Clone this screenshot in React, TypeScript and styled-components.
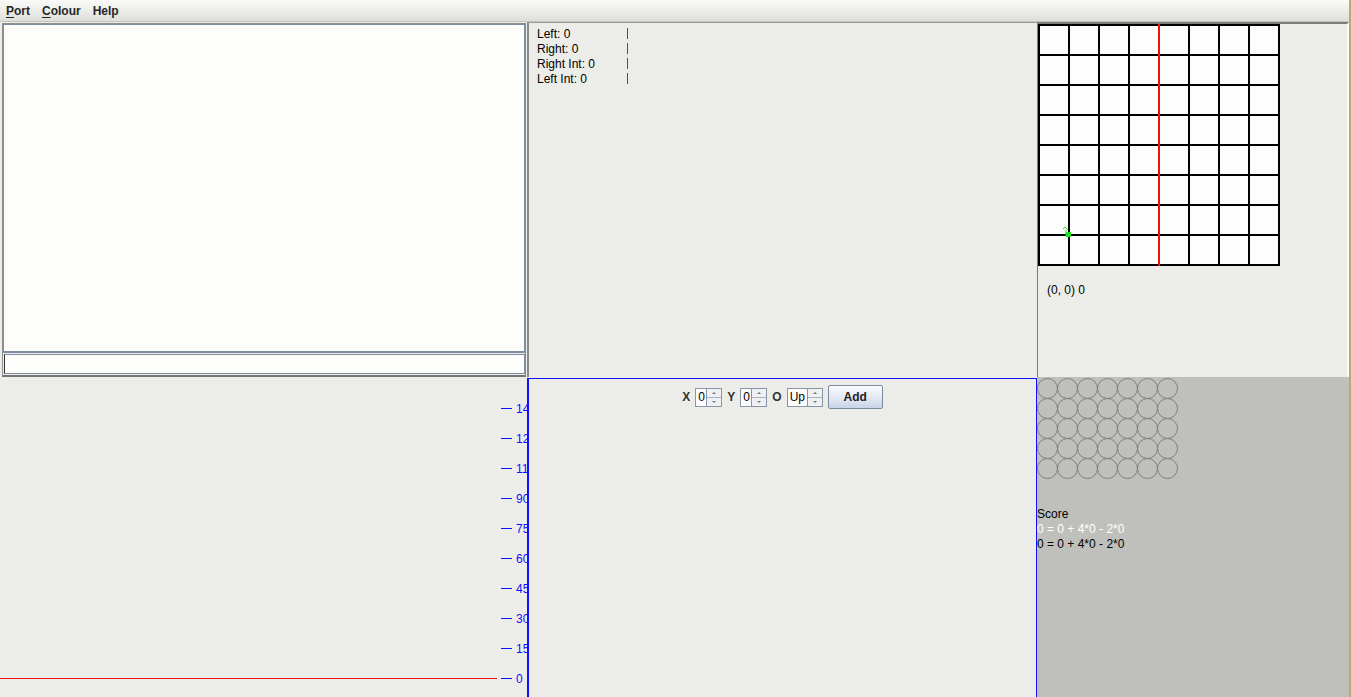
import styled, { createGlobalStyle } from "styled-components";

const GlobalStyle = createGlobalStyle`
    html, body {
        margin: 0;
        padding: 0;
        background: #ecede8;
    }
    body {
        font-family: "Liberation Sans", Arial, sans-serif;
        font-size: 12px;
        color: #000;
    }
`

const Window = styled.div`
    width: 1351px;
    height: 697px;
    box-sizing: border-box;
    border-right: 2px solid #c2a673;
    display: grid;
    grid-template-rows: 22px 355px 1fr;
    overflow: hidden;
    background: #ecede8;
`

const MenuBar = styled.div`
    display: flex;
    align-items: center;
    padding-top: 2px;
    background: linear-gradient(#fafaf8, #dedfdb);
    border-bottom: 1px solid #c4c5c1;
    box-sizing: border-box;
`

const MenuItem = styled.div`
    padding: 0 6px;
    font-weight: bold;
    font-size: 12px;
    color: #262626;
    line-height: 19px;

    u {
        text-decoration-thickness: 1px;
        text-underline-offset: 2px;
    }
`

const Row = styled.div`
    display: grid;
    grid-template-columns: 527px 510px 1fr;
    min-height: 0;
`

/* ---------- top row ---------- */

const ConsolePanel = styled.div`
    padding: 1px 1px 0 2px;
    box-sizing: border-box;
    display: flex;
`

const ConsoleFrame = styled.div`
    flex: 1;
    display: flex;
    flex-direction: column;
    border: 1px solid #8f8f8f;
    border-bottom: 2px solid #767676;
    background: #ecede8;
`

const ConsoleText = styled.div`
    flex: 1;
    background: #fdfdfb;
    border: 1px solid #7f8ea4;
    border-width: 1px 1px 2px 1px;
`

const ConsoleInput = styled.div`
    height: 20px;
    margin: 1px 0 1px 1px;
    background: #fdfdfb;
    border: 1px solid #7f8ea4;
    border-left: 1px solid #333;
    box-sizing: border-box;
`

const SensorPanel = styled.div`
    border-left: 2px solid #8c8c8c;
    border-top: 1px solid #9a9a9a;
    padding: 3px 0 0 8px;
    display: flex;
    flex-direction: column;
`

const SensorRow = styled.div`
    display: flex;
    align-items: center;
    height: 15px;
`

const SensorLabel = styled.span`
    width: 90px;
`

const SensorBar = styled.span<{ $value: number }>`
    width: 1px;
    height: 11px;
    background: #d81818;
    margin-left: ${props => props.$value}px;
`

const MapPanel = styled.div`
    border-left: 1px solid #7a7a7a;
    border-top: 2px solid #7c7c7c;
    border-right: 2px solid #fbfbf9;
    display: flex;
    flex-direction: column;
    align-items: flex-start;
`

const MapGrid = styled.svg`
    display: block;
`

const Position = styled.div`
    margin: 17px 0 0 9px;
`

/* ---------- bottom row ---------- */

const ChartPanel = styled.div`
    overflow: hidden;
`

const ChartSvg = styled.svg`
    display: block;
`

const ControlPanel = styled.div`
    border-left: 2px solid #1010ff;
    border-top: 1px solid #1010ff;
    border-right: 1px solid #1010ff;
    display: flex;
    justify-content: center;
    align-items: flex-start;
    padding-top: 6px;
    margin-top: 1px;
`

const Controls = styled.div`
    display: flex;
    align-items: center;
    gap: 5px;
`

const ControlLabel = styled.span`
    font-weight: bold;
    color: #333;
`

const Spinner = styled.div<{ $w: number }>`
    display: flex;
    width: ${props => props.$w}px;
    height: 19px;
    border: 1px solid #8896ab;
    box-sizing: border-box;
    background: #fdfdfb;
`

const SpinnerValue = styled.div`
    flex: 1;
    padding-left: 2px;
    line-height: 17px;
    border-right: 1px solid #8896ab;
`

const SpinnerArrows = styled.div`
    width: 14px;
    display: flex;
    flex-direction: column;
    background: #eef0f2;
`

const SpinnerArrow = styled.div<{ $up: boolean }>`
    flex: 1;
    display: flex;
    align-items: center;
    justify-content: center;
    border-top: ${props => props.$up ? "none" : "1px solid #a8b3c4"};
    &::after {
        content: "";
        width: 0;
        height: 0;
        border-left: 2px solid transparent;
        border-right: 2px solid transparent;
        ${props => props.$up ? "border-bottom: 2px solid #777;" : "border-top: 2px solid #777;"}
    }
`

const AddButton = styled.button`
    width: 55px;
    height: 24px;
    border: 1px solid #7d8ca3;
    border-radius: 2px;
    background: linear-gradient(#fbfcfd, #dfe6f1 60%, #c9d4e6);
    font-family: "Liberation Sans", Arial, sans-serif;
    font-weight: bold;
    font-size: 12px;
    color: #222;
    padding: 0;
`

const ScorePanel = styled.div`
    background: #bfc0bc;
    display: flex;
    flex-direction: column;
    align-items: flex-start;
`

const Circles = styled.svg`
    display: block;
    margin-top: 1px;
`

const ScoreBlock = styled.div`
    margin-top: 27px;
    line-height: 15px;
`

const ScoreLine = styled.div<{ $light?: boolean }>`
    color: ${props => props.$light ? "#ffffff" : "#000"};
`

function Spin({ value, width }: { value: string, width: number }) {
    return (<Spinner $w={width}>
        <SpinnerValue>{value}</SpinnerValue>
        <SpinnerArrows>
            <SpinnerArrow $up={true} />
            <SpinnerArrow $up={false} />
        </SpinnerArrows>
    </Spinner>);
}

const sensors = ["Left: 0", "Right: 0", "Right Int: 0", "Left Int: 0"];
// the chart panel clips the labels at the axis, as the original does
const ticks = ["0", "15", "30", "45", "60", "75", "90", "112", "127", "142"];

export default function App() {
    const cells = 8, size = 30;
    const gridLines = [];
    for (let i = 0; i <= cells; i++) {
        const p = 1 + i * size;
        gridLines.push(<line key={"h" + i} x1={0} y1={p} x2={242} y2={p} stroke="#000" strokeWidth={2} />);
        if (i !== 4) {
            gridLines.push(<line key={"v" + i} x1={p} y1={0} x2={p} y2={242} stroke="#000" strokeWidth={2} />);
        }
    }

    const circles = [];
    for (let r = 0; r < 5; r++) {
        for (let c = 0; c < 7; c++) {
            circles.push(<circle key={r + "-" + c} cx={10.5 + c * 20} cy={10.5 + r * 20} r={10} fill="none" stroke="#7e7e7e" strokeWidth={1} />);
        }
    }

    return (<>
        <GlobalStyle />
        <Window>
            <MenuBar>
                <MenuItem><u>P</u>ort</MenuItem>
                <MenuItem><u>C</u>olour</MenuItem>
                <MenuItem>Help</MenuItem>
            </MenuBar>

            <Row>
                <ConsolePanel>
                    <ConsoleFrame>
                        <ConsoleText />
                        <ConsoleInput />
                    </ConsoleFrame>
                </ConsolePanel>

                <SensorPanel>
                    {sensors.map(s => (<SensorRow key={s}>
                        <SensorLabel>{s}</SensorLabel>
                        <SensorBar $value={0} />
                    </SensorRow>))}
                </SensorPanel>

                <MapPanel>
                    <MapGrid width={242} height={242}>
                        <rect x={0} y={0} width={242} height={242} fill="#fdfdfd" />
                        {gridLines}
                        <line x1={121} y1={0} x2={121} y2={242} stroke="#f01010" strokeWidth={2} />
                        <rect x={28} y={208} width={5} height={5} fill="#20e020" />
                        <polyline points="25,205 27,203 30,206" fill="none" stroke="#20e020" strokeWidth={1} />
                        <line x1={28} y1={206} x2={28} y2={213} stroke="#20e020" strokeWidth={1} />
                    </MapGrid>
                    <Position>(0, 0) 0</Position>
                </MapPanel>
            </Row>

            <Row>
                <ChartPanel>
                    <ChartSvg width={540} height={320}>
                        <line x1={0} y1={301.5} x2={497} y2={301.5} stroke="#f01010" strokeWidth={1} />
                        {ticks.map((t, i) => {
                            const y = 301.5 - i * 30;
                            return (<g key={t}>
                                <line x1={501} y1={y} x2={512} y2={y} stroke="#1010ff" strokeWidth={1} />
                                <text x={516} y={y + 4} fill="#1010ff" fontSize={12} fontFamily="Liberation Sans, Arial, sans-serif">{t}</text>
                            </g>);
                        })}
                    </ChartSvg>
                </ChartPanel>

                <ControlPanel>
                    <Controls>
                        <ControlLabel>X</ControlLabel>
                        <Spin value="0" width={27} />
                        <ControlLabel>Y</ControlLabel>
                        <Spin value="0" width={27} />
                        <ControlLabel>O</ControlLabel>
                        <Spin value="Up" width={36} />
                        <AddButton>Add</AddButton>
                    </Controls>
                </ControlPanel>

                <ScorePanel>
                    <Circles width={142} height={102}>
                        {circles}
                    </Circles>
                    <ScoreBlock>
                        <ScoreLine>Score</ScoreLine>
                        <ScoreLine $light={true}>0 = 0 + 4*0 - 2*0</ScoreLine>
                        <ScoreLine>0 = 0 + 4*0 - 2*0</ScoreLine>
                    </ScoreBlock>
                </ScorePanel>
            </Row>
        </Window>
    </>);
}
